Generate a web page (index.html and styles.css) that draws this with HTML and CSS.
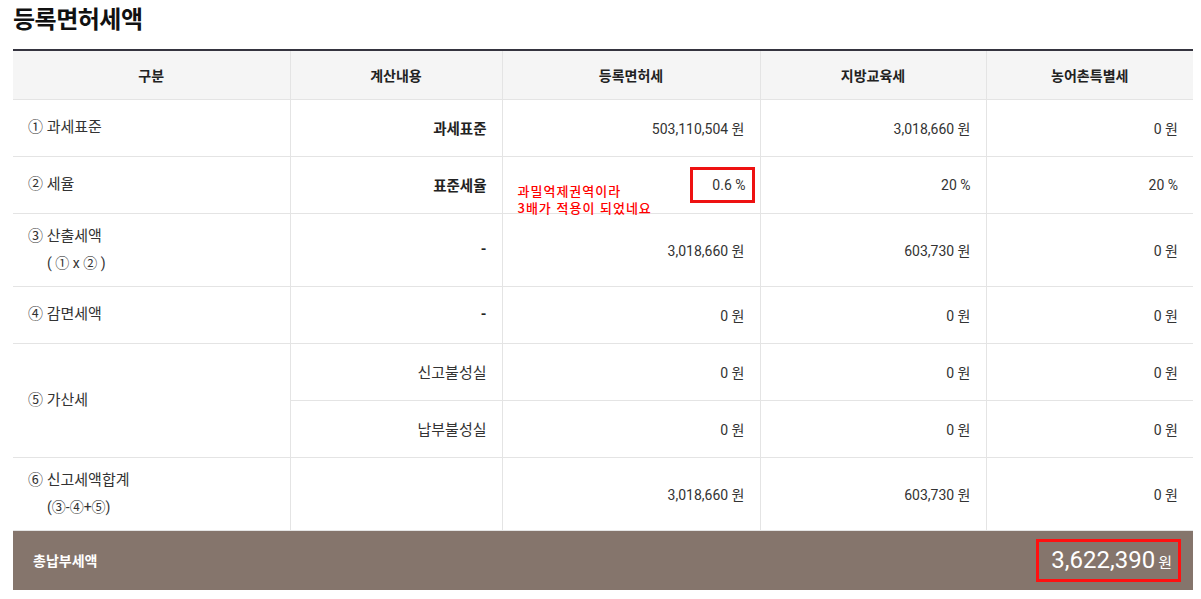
FILE: index.html
```html
<!DOCTYPE html>
<html lang="ko">
<head>
<meta charset="utf-8">
<link rel="stylesheet" href="styles.css">
</head>
<body>
<div class="page">
  <h2 class="title">등록면허세액</h2>
  <table class="tax">
    <colgroup>
      <col class="c1"><col class="c2"><col class="c3"><col class="c4"><col class="c5">
    </colgroup>
    <thead>
      <tr>
        <th>구분</th><th>계산내용</th><th>등록면허세</th><th>지방교육세</th><th>농어촌특별세</th>
      </tr>
    </thead>
    <tbody>
      <tr class="r57">
        <td class="lbl">① 과세표준</td><td class="calc b">과세표준</td><td class="num">503,110,504 원</td><td class="num">3,018,660 원</td><td class="num">0 원</td>
      </tr>
      <tr class="r57">
        <td class="lbl">② 세율</td><td class="calc b">표준세율</td>
        <td class="num rel"><span class="note">과밀억제권역이라<br>3배가 적용이 되었네요</span><span class="hl">0.6 %</span></td>
        <td class="num">20 %</td><td class="num">20 %</td>
      </tr>
      <tr class="r73">
        <td class="lbl">③ 산출세액<br><span class="sub">( ① x ② )</span></td><td class="calc b">-</td><td class="num">3,018,660 원</td><td class="num">603,730 원</td><td class="num">0 원</td>
      </tr>
      <tr class="r57">
        <td class="lbl">④ 감면세액</td><td class="calc b">-</td><td class="num">0 원</td><td class="num">0 원</td><td class="num">0 원</td>
      </tr>
      <tr class="r57">
        <td class="lbl" rowspan="2">⑤ 가산세</td><td class="calc kr">신고불성실</td><td class="num">0 원</td><td class="num">0 원</td><td class="num">0 원</td>
      </tr>
      <tr class="r57">
        <td class="calc kr">납부불성실</td><td class="num">0 원</td><td class="num">0 원</td><td class="num">0 원</td>
      </tr>
      <tr class="r73">
        <td class="lbl">⑥ 신고세액합계<br><span class="sub">(③-④+⑤)</span></td><td class="calc"></td><td class="num">3,018,660 원</td><td class="num">603,730 원</td><td class="num">0 원</td>
      </tr>
    </tbody>
    <tfoot>
      <tr>
        <td class="total-lbl" colspan="2">총납부세액</td>
        <td class="total-val" colspan="3"><span class="total-box"><span class="big">3,622,390</span><span class="won">원</span></span></td>
      </tr>
    </tfoot>
  </table>
</div>
</body>
</html>
```

FILE: styles.css
```css
* { box-sizing: border-box; }
html, body { margin: 0; padding: 0; background: #fff; }
body {
  font-family: Roboto, "Noto Sans CJK KR", sans-serif;
  color: #333;
  font-size: 14px;
}
.page { padding: 0 8px 0 13px; }
.title {
  margin: 0;
  padding-top: 2px;
  height: 49px;
  font-size: 24px;
  font-weight: 700;
  color: #111;
  line-height: 36px;
  letter-spacing: -0.5px;
}
.tax {
  width: 1180px;
  border-collapse: collapse;
  table-layout: fixed;
  border-top: 2px solid #35343f;
}
.c1 { width: 277px; }
.c2 { width: 212px; }
.c3 { width: 258px; }
.c4 { width: 226px; }
.c5 { width: 207px; }
.tax th {
  background: #f5f5f5;
  height: 49px;
  font-weight: 700;
  font-size: 14px;
  color: #222;
  border-left: 1px solid #e4e4e4;
  border-bottom: 1px solid #e4e4e4;
  padding: 0;
}
.tax th:first-child { border-left: none; }
.tax td {
  border-left: 1px solid #e4e4e4;
  border-bottom: 1px solid #e4e4e4;
  padding: 0 15px;
  font-size: 14px;
  color: #333;
}
.tax td:first-child { border-left: none; }
.tax td.lbl { border-left: none; text-align: left; line-height: 27px; font-size: 15px; }
.tax td.lbl .sub { font-size: 14px; }
.tax tbody tr:nth-child(6) td.calc { border-left: 1px solid #e4e4e4; }
.tax td.kr { font-size: 15px; }
.r57 { height: 57px; }
.r73 { height: 73px; }
.sub { padding-left: 19px; }
.calc { text-align: right; }
.tax td.b { font-weight: 700; color: #222; font-size: 14.5px; }
.num { text-align: right; }
.rel { position: relative; }
.note {
  position: absolute;
  left: 15px;
  top: 25px;
  color: #ff0000;
  font-family: "Noto Sans CJK KR", sans-serif;
  font-size: 13px;
  line-height: 17px;
  letter-spacing: 1px;
  text-align: left;
  font-weight: 500;
}
.hl {
  display: inline-block;
  border: 3px solid #ee1111;
  padding: 4px 6px 4px 19px;
  margin-right: -10px;
  line-height: 22px;
}
.tax tfoot td {
  background: #85756c;
  height: 60px;
  color: #fff;
  border: none;
}
.total-lbl { font-weight: 700; padding-left: 20px !important; font-size: 14px; }
.total-val { text-align: right; padding-right: 12px !important; }
.total-box {
  display: inline-block;
  border: 3px solid #ff1010;
  padding: 0 6px 0 12px;
  height: 43px;
  line-height: 37px;
}
.big { font-size: 24px; color: #fff; }
.won { font-size: 15px; margin-left: 3px; }
```
